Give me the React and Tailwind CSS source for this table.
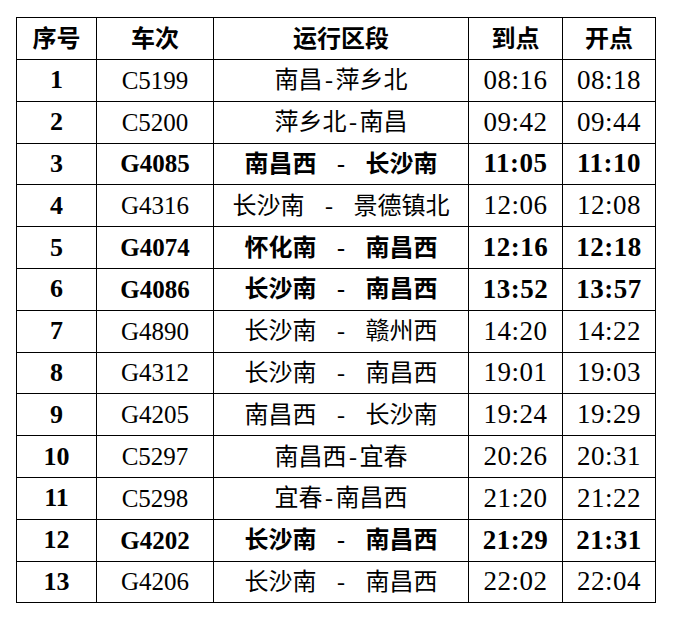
const rows = [
  ['1', 'C5199', '南昌-萍乡北', '08:16', '08:18', false],
  ['2', 'C5200', '萍乡北-南昌', '09:42', '09:44', false],
  ['3', 'G4085', '南昌西 - 长沙南', '11:05', '11:10', true],
  ['4', 'G4316', '长沙南 - 景德镇北', '12:06', '12:08', false],
  ['5', 'G4074', '怀化南 - 南昌西', '12:16', '12:18', true],
  ['6', 'G4086', '长沙南 - 南昌西', '13:52', '13:57', true],
  ['7', 'G4890', '长沙南 - 赣州西', '14:20', '14:22', false],
  ['8', 'G4312', '长沙南 - 南昌西', '19:01', '19:03', false],
  ['9', 'G4205', '南昌西 - 长沙南', '19:24', '19:29', false],
  ['10', 'C5297', '南昌西-宜春', '20:26', '20:31', false],
  ['11', 'C5298', '宜春-南昌西', '21:20', '21:22', false],
  ['12', 'G4202', '长沙南 - 南昌西', '21:29', '21:31', true],
  ['13', 'G4206', '长沙南 - 南昌西', '22:02', '22:04', false],
]

const font = "font-['Liberation_Serif','Noto_Sans_CJK_SC',serif]"

function Section({ text }) {
  // spaced " - " gets a wide slot, plain "-" a half-width one
  const spaced = text.includes(' - ')
  const parts = text.split(spaced ? ' - ' : '-')
  return (
    <span>
      {parts[0]}
      <span className={`inline-block text-center ${spaced ? 'w-[49px]' : 'w-[13px]'}`}>-</span>
      {parts[1]}
    </span>
  )
}

export default function App() {
  return (
    <div className="min-h-screen bg-white pl-4 pt-[17px]">
      <table className={`border-collapse text-black text-[24px] leading-none ${font}`}>
        <thead>
          <tr className="h-[42px]">
            <th className="w-[80px] border border-black font-bold">序号</th>
            <th className="w-[117px] border border-black font-bold">车次</th>
            <th className="w-[255px] border border-black font-bold">运行区段</th>
            <th className="w-[94px] border border-black font-bold">到点</th>
            <th className="w-[93px] border border-black font-bold">开点</th>
          </tr>
        </thead>
        <tbody>
          {rows.map(([no, train, section, arr, dep, bold]) => (
            <tr key={no} className="h-[41.8px]">
              <td className="border border-black text-center text-[26px] font-bold">{no}</td>
              <td className={`border border-black text-center text-[25px] ${bold ? 'font-bold' : ''}`}>{train}</td>
              <td className={`border border-black text-center ${bold ? 'font-bold' : ''}`}>
                <Section text={section} />
              </td>
              <td className={`border border-black text-center text-[27px] tracking-[0.5px] ${bold ? 'font-bold' : ''}`}>{arr}</td>
              <td className={`border border-black text-center text-[27px] tracking-[0.5px] ${bold ? 'font-bold' : ''}`}>{dep}</td>
            </tr>
          ))}
        </tbody>
      </table>
    </div>
  )
}
